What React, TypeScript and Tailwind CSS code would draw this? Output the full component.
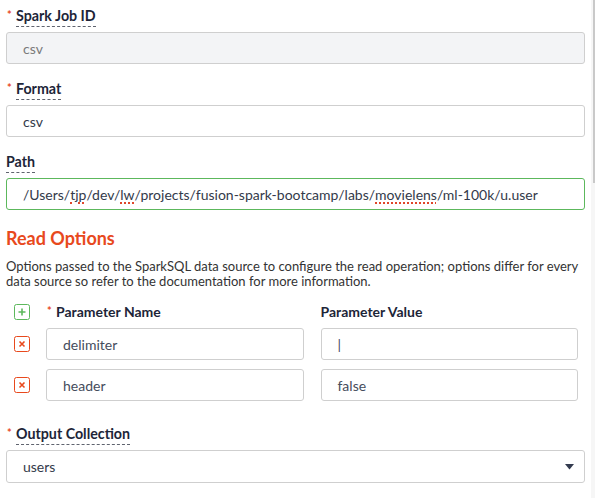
import React from "react";

const font = { fontFamily: "Lato, 'Open Sans', sans-serif" };

function Req() {
  return (
    <span className="inline-block w-[10px] align-top text-[11px] leading-[13px] font-bold text-[#e8491d] pl-[1px] pt-[2px]">
      *
    </span>
  );
}

function Label({ text, required }: { text: string; required?: boolean }) {
  return (
    <div className="flex items-start h-[21px] mb-[5px]">
      {required && <Req />}
      <span className="text-[14.25px] font-bold leading-[20px] text-[#1d2538] border-b border-dashed border-[#5f636e]">
        {text}
      </span>
    </div>
  );
}

function Box({
  children,
  disabled,
  focused,
  className = "",
}: {
  children?: React.ReactNode;
  disabled?: boolean;
  focused?: boolean;
  className?: string;
}) {
  return (
    <div
      className={`flex items-center h-[32px] rounded-[3px] border px-[16px] text-[14px] whitespace-nowrap overflow-hidden ${
        focused ? "border-[#5cb85c]" : "border-[#cfcfcf]"
      } ${disabled ? "bg-[#f3f4f6] text-[#7a7a7a]" : "bg-white text-[#333a4a]"} ${className}`}
    >
      {children}
    </div>
  );
}

const Squiggle = ({ children }: { children: React.ReactNode }) => (
  <span className="underline decoration-dotted decoration-[#e0462a] decoration-[1.5px] underline-offset-[3px]">
    {children}
  </span>
);

function PlusIcon() {
  return (
    <svg width="16" height="16" viewBox="0 0 16 16">
      <rect x="0.5" y="0.5" width="15" height="15" rx="2" fill="white" stroke="#5cb85c" />
      <path d="M8 4.5v7M4.5 8h7" stroke="#5cb85c" strokeWidth="1.6" />
    </svg>
  );
}

function RemoveIcon() {
  return (
    <svg width="16" height="16" viewBox="0 0 16 16">
      <rect x="0.5" y="0.5" width="15" height="15" rx="2" fill="white" stroke="#e8491d" />
      <path d="M5.5 5.5l5 5M10.5 5.5l-5 5" stroke="#e8491d" strokeWidth="1.6" />
    </svg>
  );
}

const params = [
  { name: "delimiter", value: "|" },
  { name: "header", value: "false" },
];

export default function App() {
  return (
    <div className="flex w-[595px] h-[498px] bg-white overflow-hidden" style={font}>
      <div className="flex-1 px-[6px] pt-[6px]">
        <Label text="Spark Job ID" required />
        <Box disabled>csv</Box>

        <div className="mt-[15px]" />
        <Label text="Format" required />
        <Box>csv</Box>

        <div className="mt-[15px]" />
        <Label text="Path" />
        <Box focused className="text-[#2b3142]">
          /Users/<Squiggle>tjp</Squiggle>/dev/<Squiggle>lw</Squiggle>/projects/fusion-spark-bootcamp/labs/
          <Squiggle>movielens</Squiggle>/ml-100k/u.user
        </Box>

        <h2 className="mt-[16px] text-[18px] font-bold leading-[24px] text-[#e8491d]">Read Options</h2>
        <p className="mt-[9px] text-[13px] leading-[15px] text-[#333] pr-[4px]">
          Options passed to the SparkSQL data source to configure the read operation; options differ for every
          data source so refer to the documentation for more information.
        </p>

        <div className="mt-[13px] pr-[7px]">
          <div className="flex items-center h-[20px]">
            <div className="w-[40px] pl-[8px] flex items-center">
              <PlusIcon />
            </div>
            <div className="flex-1 flex items-start">
              <Req />
              <span className="text-[14px] font-bold leading-[20px] text-[#1d2538]">Parameter Name</span>
            </div>
            <div className="w-[17px]" />
            <div className="flex-1 text-[14px] font-bold leading-[20px] text-[#1d2538]">Parameter Value</div>
          </div>

          <div className="mt-[6px] flex flex-col gap-[9px]">
            {params.map((p) => (
              <div key={p.name} className="flex items-center">
                <div className="w-[40px] pl-[8px] flex items-center">
                  <RemoveIcon />
                </div>
                <div className="flex-1 flex gap-[17px]">
                  <Box className="flex-1 text-[#454c5c]">{p.name}</Box>
                  <Box className="flex-1 text-[#454c5c]">{p.value}</Box>
                </div>
              </div>
            ))}
          </div>
        </div>

        <div className="mt-[23px]" />
        <Label text="Output Collection" required />
        <div className="mt-[2px] flex items-center h-[33px] rounded-[3px] border border-[#cfcfcf] pl-[16px] pr-[10px] text-[14px] text-[#333a4a]">
          <span className="flex-1">users</span>
          <svg width="9" height="6" viewBox="0 0 9 6">
            <path d="M0 0h9L4.5 5.5z" fill="#333b4f" />
          </svg>
        </div>
      </div>
      <div className="w-[4px] bg-[#f6f6f6] flex justify-end">
        <div className="w-[2px] h-[183px] bg-[#c9c9c9]" />
      </div>
    </div>
  );
}
